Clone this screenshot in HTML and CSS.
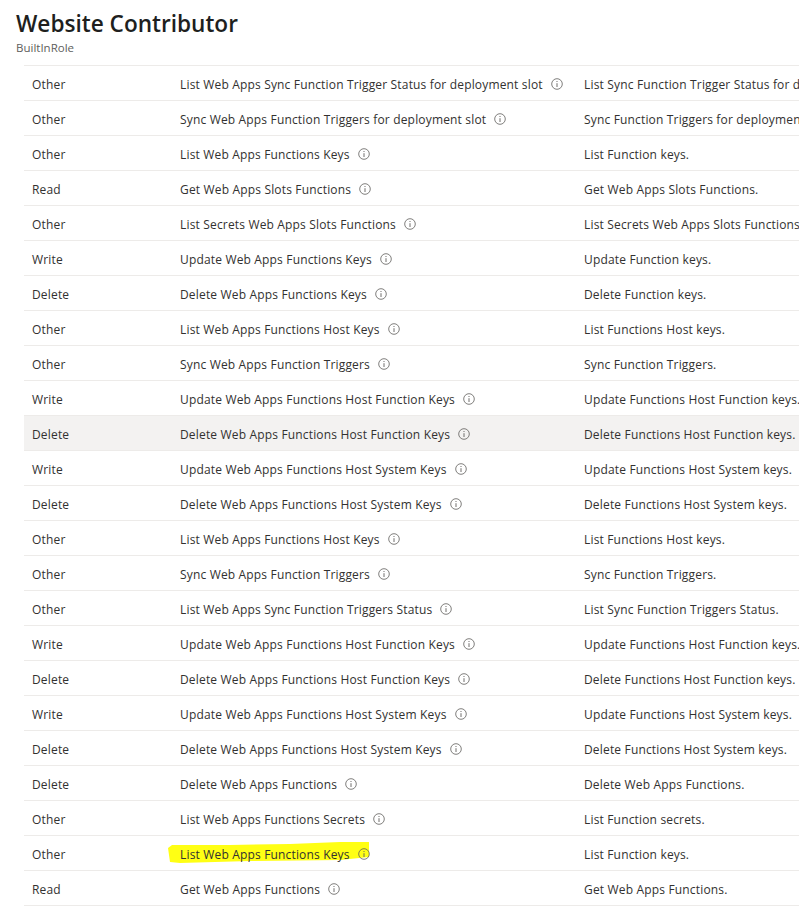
FILE: index.html
```html
<!DOCTYPE html>
<html lang="en">
<head>
<meta charset="utf-8">
<title>Website Contributor</title>
<link rel="stylesheet" href="styles.css">
</head>
<body>
<svg width="0" height="0" class="defs"><symbol id="info" viewBox="0 0 12 12"><circle cx="6" cy="6" r="5.3" fill="none" stroke="currentColor" stroke-width=".8"/><path d="M6 5.2V9" stroke="currentColor" stroke-width=".9"/><circle cx="6" cy="3.5" r=".6" fill="currentColor"/></symbol></svg>
<header class="head">
<h1>Website Contributor</h1>
<p>BuiltInRole</p>
</header>
<div class="table">
<div class="row"><span>Other</span><span class="name">List Web Apps Sync Function Trigger Status for deployment slot<svg class="i"><use href="#info"/></svg></span><span>List Sync Function Trigger Status for deployment slot.</span></div>
<div class="row"><span>Other</span><span class="name">Sync Web Apps Function Triggers for deployment slot<svg class="i"><use href="#info"/></svg></span><span>Sync Function Triggers for deployment slot.</span></div>
<div class="row"><span>Other</span><span class="name">List Web Apps Functions Keys<svg class="i"><use href="#info"/></svg></span><span>List Function keys.</span></div>
<div class="row"><span>Read</span><span class="name">Get Web Apps Slots Functions<svg class="i"><use href="#info"/></svg></span><span>Get Web Apps Slots Functions.</span></div>
<div class="row"><span>Other</span><span class="name">List Secrets Web Apps Slots Functions<svg class="i"><use href="#info"/></svg></span><span>List Secrets Web Apps Slots Functions.</span></div>
<div class="row"><span>Write</span><span class="name">Update Web Apps Functions Keys<svg class="i"><use href="#info"/></svg></span><span>Update Function keys.</span></div>
<div class="row"><span>Delete</span><span class="name">Delete Web Apps Functions Keys<svg class="i"><use href="#info"/></svg></span><span>Delete Function keys.</span></div>
<div class="row"><span>Other</span><span class="name">List Web Apps Functions Host Keys<svg class="i"><use href="#info"/></svg></span><span>List Functions Host keys.</span></div>
<div class="row"><span>Other</span><span class="name">Sync Web Apps Function Triggers<svg class="i"><use href="#info"/></svg></span><span>Sync Function Triggers.</span></div>
<div class="row"><span>Write</span><span class="name">Update Web Apps Functions Host Function Keys<svg class="i"><use href="#info"/></svg></span><span>Update Functions Host Function keys.</span></div>
<div class="row hover"><span>Delete</span><span class="name">Delete Web Apps Functions Host Function Keys<svg class="i"><use href="#info"/></svg></span><span>Delete Functions Host Function keys.</span></div>
<div class="row"><span>Write</span><span class="name">Update Web Apps Functions Host System Keys<svg class="i"><use href="#info"/></svg></span><span>Update Functions Host System keys.</span></div>
<div class="row"><span>Delete</span><span class="name">Delete Web Apps Functions Host System Keys<svg class="i"><use href="#info"/></svg></span><span>Delete Functions Host System keys.</span></div>
<div class="row"><span>Other</span><span class="name">List Web Apps Functions Host Keys<svg class="i"><use href="#info"/></svg></span><span>List Functions Host keys.</span></div>
<div class="row"><span>Other</span><span class="name">Sync Web Apps Function Triggers<svg class="i"><use href="#info"/></svg></span><span>Sync Function Triggers.</span></div>
<div class="row"><span>Other</span><span class="name">List Web Apps Sync Function Triggers Status<svg class="i"><use href="#info"/></svg></span><span>List Sync Function Triggers Status.</span></div>
<div class="row"><span>Write</span><span class="name">Update Web Apps Functions Host Function Keys<svg class="i"><use href="#info"/></svg></span><span>Update Functions Host Function keys.</span></div>
<div class="row"><span>Delete</span><span class="name">Delete Web Apps Functions Host Function Keys<svg class="i"><use href="#info"/></svg></span><span>Delete Functions Host Function keys.</span></div>
<div class="row"><span>Write</span><span class="name">Update Web Apps Functions Host System Keys<svg class="i"><use href="#info"/></svg></span><span>Update Functions Host System keys.</span></div>
<div class="row"><span>Delete</span><span class="name">Delete Web Apps Functions Host System Keys<svg class="i"><use href="#info"/></svg></span><span>Delete Functions Host System keys.</span></div>
<div class="row"><span>Delete</span><span class="name">Delete Web Apps Functions<svg class="i"><use href="#info"/></svg></span><span>Delete Web Apps Functions.</span></div>
<div class="row"><span>Other</span><span class="name">List Web Apps Functions Secrets<svg class="i"><use href="#info"/></svg></span><span>List Function secrets.</span></div>
<div class="row"><span>Other</span><span class="name marked"><svg class="mark" viewBox="0 0 202 24" preserveAspectRatio="none"><path d="M0 7 L4 4 L62 4 L122 3 L172 1 L201 1 L201 16 L172 19 L82 20 L12 22 L2 21Z"/></svg>List Web Apps Functions Keys<svg class="i"><use href="#info"/></svg></span><span>List Function keys.</span></div>
<div class="row"><span>Read</span><span class="name">Get Web Apps Functions<svg class="i"><use href="#info"/></svg></span><span>Get Web Apps Functions.</span></div>
</div>
</body>
</html>
```
FILE: styles.css
```css
html, body { margin: 0; height: 911px; overflow: hidden; background: #fff; }
body { font-family: "Open Sans", "Noto Sans", sans-serif; color: #323130; width: 799px; }
.defs { position: absolute; }
.head { padding: 9px 0 0 16px; height: 56px; box-sizing: border-box; }
.head h1 { margin: 0; font-size: 22.6px; line-height: 30px; font-weight: 600; color: #201f1e; }
.head p { margin: 0; font-size: 11.5px; line-height: 17px; color: #605e5c; }
.table { margin-left: 24px; border-top: 1px solid #edebe9; margin-top: 9px; }
.row { display: grid; grid-template-columns: 148px 404px 1fr; height: 32px; padding-top: 2px; border-bottom: 1px solid #edebe9; align-items: center; padding-left: 8px; font-size: 12px; letter-spacing: .167px; white-space: nowrap; overflow: hidden; }
.row.hover { background: #f3f2f1; }
.name { position: relative; display: flex; align-items: center; }
.i { width: 12px; height: 12px; margin-left: 8px; color: #605e5c; flex: none; }
.mark { position: absolute; left: -12px; top: -5px; width: 202px; height: 24px; z-index: -1; fill: #ffff14; }
.marked { z-index: 0; }
```
